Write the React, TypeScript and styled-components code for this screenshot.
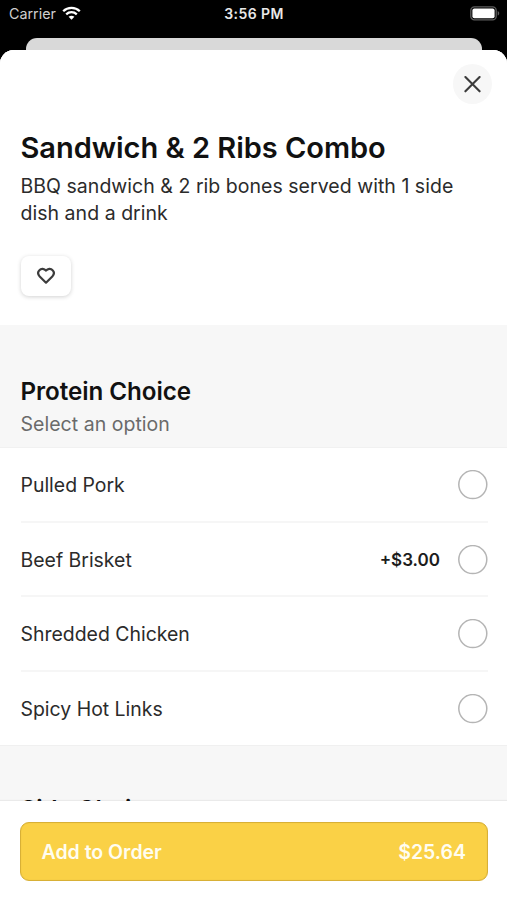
import React from "react";
import styled, { createGlobalStyle } from "styled-components";

const GlobalStyle = createGlobalStyle`
  * { box-sizing: border-box; }
  html, body { margin: 0; background: #000; overflow: hidden; }
  button { font: inherit; border: 0; padding: 0; margin: 0; }
  h1, h2, p, ul { margin: 0; padding: 0; font-weight: 400; }
`;

const Screen = styled.div`
  width: 507px;
  height: 900px;
  display: flex;
  flex-direction: column;
  overflow: hidden;
  background: #000;
  color: #2b2b2b;
  font-family: Inter, "Liberation Sans", sans-serif;
`;

const StatusBar = styled.header`
  height: 38px;
  flex: none;
  display: grid;
  grid-template-columns: 1fr auto 1fr;
  align-items: start;
  padding: 5px 7px 0 9px;
  color: #e8e8e8;
  font-size: 14.3px;
  line-height: 18px;
`;

const Carrier = styled.div`
  display: flex;
  align-items: center;
  gap: 6px;
  color: #cfcfcf;
  svg { display: block; margin-top: -2px; }
`;

const Clock = styled.div`
  font-size: 14px;
  font-weight: 600;
  letter-spacing: 0.4px;
  margin-left: -1px;
`;

const BatterySlot = styled.div`
  display: flex;
  justify-content: flex-end;
  padding-top: 1px;
  svg { display: block; }
`;

const BackSheet = styled.div`
  flex: none;
  height: 12px;
  margin: 0 25px 0 26px;
  border-radius: 11px 11px 0 0;
  background: #d9d9d9;
`;

const Sheet = styled.main`
  flex: 1;
  min-height: 0;
  display: flex;
  flex-direction: column;
  overflow: hidden;
  border-radius: 14px 14px 0 0;
  background: #fff;
`;

const Scroller = styled.div`
  flex: 1;
  min-height: 0;
  overflow: hidden;
  background: #f7f7f7;
`;

const Intro = styled.section`
  height: 275px;
  display: flex;
  flex-direction: column;
  align-items: flex-start;
  padding: 14px 15px 0 20.5px;
  background: #fff;
`;

const CloseButton = styled.button`
  align-self: flex-end;
  width: 39px;
  height: 40px;
  display: grid;
  place-items: center;
  border-radius: 50%;
  background: #f7f7f7;
  color: #3c3c3c;
`;

const Title = styled.h1`
  margin-top: 25px;
  font-size: 29px;
  line-height: 38px;
  font-weight: 600;
  letter-spacing: -0.03px;
  color: #111;
  white-space: nowrap;
`;

const Description = styled.p`
  margin-top: 6px;
  font-size: 19.5px;
  line-height: 26.5px;
  letter-spacing: 0.03px;
  white-space: nowrap;
`;

const FavoriteButton = styled.button`
  width: 50px;
  height: 40px;
  margin: 30px 0 0 0.5px;
  display: grid;
  place-items: center;
  border-radius: 8px;
  background: #fff;
  color: #3c3c3c;
  box-shadow: 0 1px 4px rgba(0, 0, 0, 0.18);
`;

const GroupHeader = styled.header`
  height: 123px;
  padding: 51px 20.5px 0;
  border-bottom: 1px solid #f1f1f1;
`;

const GroupTitle = styled.h2`
  font-size: 24.2px;
  line-height: 31px;
  letter-spacing: -0.05px;
  font-weight: 600;
  color: #111;
`;

const GroupHint = styled.p`
  margin-top: 4px;
  font-size: 19.5px;
  line-height: 26px;
  letter-spacing: 0.03px;
  color: #6a6a6a;
`;

const Options = styled.ul`
  list-style: none;
  padding: 0 19px 0 20.5px;
  background: #fff;
  border-bottom: 1px solid #f0f0f0;
`;

const Option = styled.li`
  height: 74.5px;
  display: flex;
  align-items: center;
  padding-top: 2px;
  font-size: 19.45px;
  line-height: 26px;
  border-bottom: 2px solid #f6f6f6;
  &:last-child { height: 73.5px; border-bottom: 0; }
`;

const OptionName = styled.span`
  flex: 1;
`;

const Surcharge = styled.span`
  margin-right: 18px;
  font-size: 17px;
  font-weight: 600;
  color: #1c1c1c;
`;

const Radio = styled.svg`
  width: 30px;
  height: 30px;
  fill: none;
  stroke: #b5b5b5;
  stroke-width: 1.5px;
`;

const NextHeader = styled(GroupHeader)`
  padding-top: 48px;
`;

const Footer = styled.footer`
  flex: none;
  height: 99px;
  padding: 21px 19px 0 20px;
  box-shadow: 0 -1px 1px rgba(0, 0, 0, 0.05);
  background: #fff;
`;

const OrderButton = styled.button`
  width: 100%;
  height: 59px;
  display: flex;
  align-items: center;
  justify-content: space-between;
  padding: 0 21px 0 20.5px;
  border: 1px solid #d8b036;
  border-radius: 9px;
  background: #fad146;
  box-shadow: inset 0 0 1px #dcb63c;
  color: #fffdf0;
  font-size: 19.5px;
  font-weight: 600;
`;

const choices = [
  { name: "Pulled Pork" },
  { name: "Beef Brisket", surcharge: "+$3.00" },
  { name: "Shredded Chicken" },
  { name: "Spicy Hot Links" },
];

function WifiIcon() {
  return (
    <svg width="19" height="14" viewBox="0 0 19 14" fill="none" stroke="#fff" strokeWidth="2.3">
      <path d="M1.2 5.2C5.8 .7 13.2.7 17.8 5.2" />
      <path d="M4.2 8.3c3-2.8 7.6-2.8 10.6 0" />
      <path d="M6.6 10.8c1.7-1.5 4.1-1.5 5.8 0L9.5 13.7Z" fill="#fff" stroke="none" />
    </svg>
  );
}

function BatteryIcon() {
  return (
    <svg width="30" height="15" viewBox="0 0 30 15">
      <rect x=".8" y=".8" width="25.4" height="13" rx="3.6" fill="none" stroke="#5d5d5d" strokeWidth="1.3" />
      <rect x="2.4" y="2.4" width="22.2" height="9.8" rx="2" fill="#fff" />
      <path d="M27.7 5c2 .8 2 3.8 0 4.6Z" fill="#5d5d5d" />
    </svg>
  );
}

export default function App() {
  return (
    <>
      <GlobalStyle />
      <Screen>
        <StatusBar>
          <Carrier>Carrier <WifiIcon /></Carrier>
          <Clock>3:56 PM</Clock>
          <BatterySlot><BatteryIcon /></BatterySlot>
        </StatusBar>
        <BackSheet />
        <Sheet>
          <Scroller>
            <Intro>
              <CloseButton aria-label="Close">
                <svg width="17" height="17" viewBox="0 0 17 17" fill="none" stroke="currentColor" strokeWidth="2.1" strokeLinecap="round">
                  <path d="m1.4 1.1 14.2 14.2M15.6 1.1 1.4 15.3" />
                </svg>
              </CloseButton>
              <Title>Sandwich &amp; 2 Ribs Combo</Title>
              <Description>
                BBQ sandwich &amp; 2 rib bones served with 1 side<br />dish and a drink
              </Description>
              <FavoriteButton aria-label="Add to favorites">
                <svg width="20" height="18" viewBox="0 0 20 18" fill="none" stroke="currentColor" strokeWidth="2.2" strokeLinejoin="round">
                  <path d="M10 3.7C8.3 1.5 5.1 1.3 3.4 3.2 1.6 5.1 2 7.7 3.7 9.5L10 15.7l6.3-6.2c1.7-1.8 2.1-4.4.3-6.3-1.7-1.9-4.9-1.7-6.6.5Z" />
                </svg>
              </FavoriteButton>
            </Intro>
            <GroupHeader>
              <GroupTitle>Protein Choice</GroupTitle>
              <GroupHint>Select an option</GroupHint>
            </GroupHeader>
            <Options>
              {choices.map(({ name, surcharge }) => (
                <Option key={name}>
                  <OptionName>{name}</OptionName>
                  {surcharge && <Surcharge>{surcharge}</Surcharge>}
                  <Radio viewBox="0 0 30 30" role="radio" aria-checked={false} aria-label={name}>
                    <circle cx="14.8" cy="14.6" r="14" />
                  </Radio>
                </Option>
              ))}
            </Options>
            <NextHeader>
              <GroupTitle>Side Choice</GroupTitle>
            </NextHeader>
          </Scroller>
          <Footer>
            <OrderButton>
              <span>Add to Order</span>
              <span>$25.64</span>
            </OrderButton>
          </Footer>
        </Sheet>
      </Screen>
    </>
  );
}
